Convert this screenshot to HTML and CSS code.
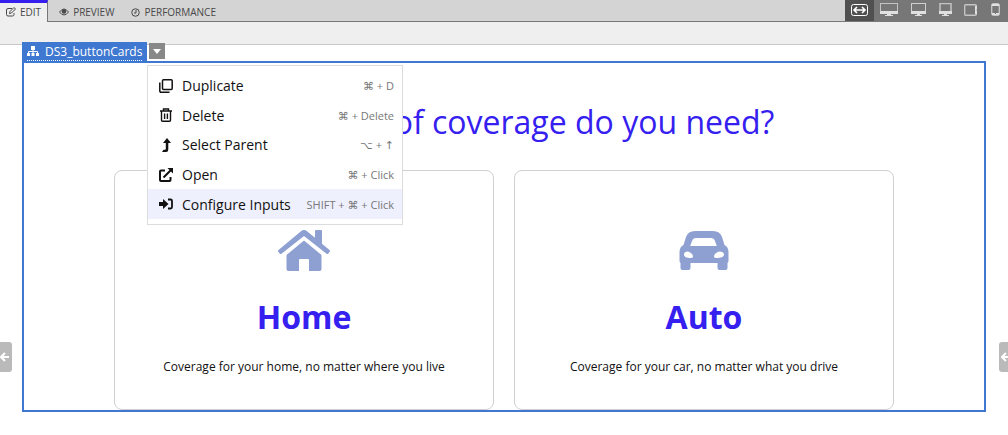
FILE: index.html
```html
<!DOCTYPE html>
<html lang="en">
<head>
<meta charset="utf-8">
<title>Page editor</title>
<link rel="stylesheet" href="styles.css">
</head>
<body>
<header class="topbar">
  <nav class="tabs">
    <button class="tab tab-active"><svg width="10" height="10" viewBox="0 0 20 20" fill="none" stroke="currentColor" stroke-width="2"><path d="M12 3H4a3 3 0 0 0-3 3v9a3 3 0 0 0 3 3h9a3 3 0 0 0 3-3v-3"/><path d="M7 13l1-4 8-8 3 3-8 8z"/></svg>EDIT</button>
    <button class="tab"><svg width="10" height="10" viewBox="0 0 20 20"><path d="M1 10q9-12 18 0q-9 12-18 0z" fill="none" stroke="currentColor" stroke-width="2"/><circle cx="10" cy="9" r="4.500" fill="currentColor"/></svg>PREVIEW</button>
    <button class="tab"><svg width="9" height="9" viewBox="0 0 18 18" fill="none" stroke="currentColor" stroke-width="2"><circle cx="9" cy="9" r="7.500"/><path d="M10 4v6H6"/></svg>PERFORMANCE</button>
  </nav>
  <div class="devices">
    <button class="device device-active" aria-label="Fluid width"><svg width="17" height="12" viewBox="0 0 17 12" fill="none" stroke="#fff"><rect x=".5" y=".5" width="16" height="11" rx="2"/><path d="M3.500 6h10M6 3L3 6l3 3M11 3l3 3-3 3" stroke-width="1.600"/></svg></button>
    <button class="device" aria-label="Wide desktop"><svg width="18" height="13" viewBox="0 0 18 13"><rect x=".5" y=".5" width="17" height="9" fill="none" stroke="#c4c4c4"/><path d="M0 8h18v3H0zM7 11h4v1h2v1H5v-1h2z" fill="#e0e0e0"/></svg></button>
    <button class="device" aria-label="Desktop"><svg width="15" height="13" viewBox="0 0 15 13"><rect x=".5" y=".5" width="14" height="9" fill="none" stroke="#d0d0d0"/><path d="M0 8h15v3H0zM6 11h3v1h2v1H4v-1h2z" fill="#e0e0e0"/></svg></button>
    <button class="device" aria-label="Small desktop"><svg width="13" height="13" viewBox="0 0 13 13"><rect x="1" y=".5" width="11" height="9" fill="none" stroke="#c4c4c4" stroke-width="1.500"/><path d="M0 8h13v3H0zM5 11h3v1h2v1H3v-1h2z" fill="#e0e0e0"/></svg></button>
    <button class="device" aria-label="Tablet"><svg width="13" height="12" viewBox="0 0 13 12"><rect x=".7" y=".7" width="11.600" height="10.600" rx="1" fill="none" stroke="#c4c4c4" stroke-width="1.400"/><path d="M11 2h2v3h-1v2h1v3h-2z" fill="#e0e0e0"/></svg></button>
    <button class="device" aria-label="Phone"><svg width="9" height="13" viewBox="0 0 9 13"><rect x=".7" y=".7" width="7.600" height="11.600" rx="2" fill="none" stroke="#c4c4c4" stroke-width="1.400"/><path d="M1 1h7v2H1zM1 10h3v1h1v-1h3v2H1z" fill="#e0e0e0"/></svg></button>
  </div>
</header>
<div class="subbar"></div>
<main class="workspace">
  <button class="handle handle-left" aria-label="Toggle left panel"><svg width="10" height="10" viewBox="0 0 10 10" fill="none" stroke="#fff" stroke-width="2"><path d="M9 5H2M5 1L1 5l4 4"/></svg></button>
  <section class="frame">
    <div class="selection">
      <button class="component"><span class="component-name"><svg width="12" height="11" viewBox="0 0 12 11"><path d="M4 0h4v4H4zM0 7h3v3H0zM4.500 7h3v3h-3zM9 7h3v3H9z" fill="currentColor"/><path d="M6 4v3M1.500 7V5.500h9V7" fill="none" stroke="currentColor"/></svg>DS3_buttonCards</span></button>
      <button class="more" aria-label="Component actions"><svg width="8" height="5" viewBox="0 0 8 5"><path d="M0 0h8L4 5z" fill="#fff"/></svg></button>
      <div class="menu" role="menu">
        <button class="item" role="menuitem"><svg width="14" height="14" viewBox="0 0 14 14" fill="none" stroke="currentColor" stroke-width="1.500"><rect x="3.500" y=".8" width="9.700" height="9.700" rx="1"/><path d="M.8 3.500V12a1.200 1.200 0 0 0 1.200 1.200h8.500"/></svg><span>Duplicate</span><kbd>⌘ + D</kbd></button>
        <button class="item" role="menuitem"><svg width="14" height="14" viewBox="0 0 14 14" fill="none" stroke="currentColor" stroke-width="1.400"><path d="M1 3h12M4.500 3V1h5v2M2.500 3v9.300q0 1 1 1h7q1 0 1-1V3M5.600 5.500v5.500M8.400 5.500v5.500"/></svg><span>Delete</span><kbd>⌘ + Delete</kbd></button>
        <button class="item" role="menuitem"><svg width="14" height="14" viewBox="0 0 14 14"><path d="M8 0l4 5H9.300v6.500Q9.300 14 7 14H3l1.500-2.300H6q.8 0 .8-.8V5H4z" fill="currentColor"/></svg><span>Select Parent</span><kbd>⌥ + ↑</kbd></button>
        <button class="item" role="menuitem"><svg width="14" height="14" viewBox="0 0 14 14"><path d="M6 2.500H2q-1 0-1 1V12q0 1 1 1h8.500q1 0 1-1V9M4.500 9.500L12 2" fill="none" stroke="currentColor" stroke-width="2"/><path d="M8.500 0H14v5.500z" fill="currentColor"/></svg><span>Open</span><kbd>⌘ + Click</kbd></button>
        <button class="item item-active" role="menuitem"><svg width="14" height="14" viewBox="0 0 14 14"><path d="M0 5h4V2l5.500 5L4 12V9H0z" fill="currentColor"/><path d="M9 2.500h2.500q1.500 0 1.500 1.500v6q0 1.500-1.500 1.500H9" fill="none" stroke="currentColor" stroke-width="1.800"/></svg><span>Configure Inputs</span><kbd>SHIFT + ⌘ + Click</kbd></button>
      </div>
    </div>
    <h1 class="title">What type of coverage do you need?</h1>
    <div class="cards">
      <article class="card">
        <svg class="card-icon" width="52" height="42" viewBox="0 0 52 42" fill="currentColor"><path d="M26 0q1.500 0 3 1.200l8 6.600V1q0-1 1-1h5q1 0 1 1v12.800l7.500 6.200q1 .8.200 1.800L50.300 23.500q-.8 1-1.800.2L26 6 3.500 23.700q-1 .8-1.800-.2L.3 21.800q-.8-1 .2-1.800L23 1.200Q24.500 0 26 0z"/><path d="M26 10.500L43.500 25v14q0 2-2 2H31V30q0-1-1-1h-8q-1 0-1 1v11H10.500q-2 0-2-2V25z"/></svg>
        <h2>Home</h2>
        <p>Coverage for your home, no matter where you live</p>
      </article>
      <article class="card">
        <svg class="card-icon" width="52" height="42" viewBox="0 0 52 42"><path fill="currentColor" fill-rule="evenodd" d="M17 1h18q7 0 9 6L46.500 15q4 2 4 7v9q0 1-1 2v5q0 2-2 2h-6q-2 0-2-2v-5h-27v5q0 2-2 2h-6q-2 0-2-2v-5q-1-1-1-2v-9q0-5 4-7L8 7q2-6 9-6zM18 8q-3 0-4 3l-1.800 5H38.800L37 11q-1-3-4-3zM10 21.500q-4 0-4 3t5 3.500q4 .5 4-1.500 0-3-5-5zm31 0q-5 2-5 5 0 2 4 1.500 6-.5 6-3.500t-5-3z"/></svg>
        <h2>Auto</h2>
        <p>Coverage for your car, no matter what you drive</p>
      </article>
    </div>
  </section>
  <button class="handle handle-right" aria-label="Toggle right panel"><svg width="10" height="10" viewBox="0 0 10 10" fill="none" stroke="#fff" stroke-width="2"><path d="M9 5H2M5 1L1 5l4 4"/></svg></button>
</main>
</body>
</html>
```
FILE: styles.css
```css
* { box-sizing: border-box; }
body {
  margin: 0;
  background: #fff;
  color: #111;
  font-family: "Open Sans", "Noto Sans", sans-serif;
  overflow-x: hidden;
}
button {
  margin: 0;
  padding: 0;
  border: 0;
  background: none;
  color: inherit;
  font: inherit;
}
svg { display: block; flex: none; }
.topbar {
  display: flex;
  justify-content: space-between;
  height: 22px;
  background: #d4d4d4;
  border-bottom: 1px solid #777;
}
.tabs { display: flex; }
.tab {
  display: flex;
  align-items: center;
  gap: 4px;
  padding: 3px 6px 0;
  color: #484848;
  font-size: 10px;
}
.tab + .tab { padding-left: 11px; }
.tab-active {
  height: 22px;
  padding: 0 6px 1px;
  background: #efefef;
  border-top: 3px solid #3520f0;
  border-right: 1px solid #777;
}
.devices { display: flex; background: #777; }
.device {
  display: flex;
  align-items: center;
  justify-content: center;
  width: 25px;
  padding-bottom: 2px;
}
.device-active { width: 29px; background: #505050; }
.device:nth-child(2) { width: 30px; }
.device:nth-child(3) { width: 28px; }
.device:nth-child(4) { width: 26px; }
.subbar { height: 23px; background: #efefef; border-bottom: 1px solid #c8c8c8; }
.workspace {
  position: relative;
  padding: 16px 22px 23px;
}
.frame {
  position: relative;
  border: 2px solid #3f78d0;
  padding: 36px 90px 0;
}
.selection {
  position: absolute;
  top: -21px;
  left: -2px;
  display: flex;
  gap: 2px;
}
.component {
  height: 20px;
  padding: 0 5px;
  background: #3f78d0;
  color: #fff;
  font-size: 12px;
}
.component-name {
  display: flex;
  align-items: center;
  gap: 6px;
  height: 18px;
  border-bottom: 1px dotted #fff;
}
.more {
  display: flex;
  align-items: center;
  justify-content: center;
  width: 16px;
  height: 16px;
  margin-top: 1px;
  background: #888;
}
.menu {
  position: absolute;
  z-index: 1;
  top: 23px;
  left: 125px;
  display: grid;
  grid-auto-rows: 1fr;
  width: 256px;
  height: 160px;
  padding: 5px 0;
  background: #fff;
  border: 1px solid #dcdcdc;
}
.item {
  display: flex;
  align-items: center;
  gap: 9px;
  padding: 0 8px 0 11px;
  font-size: 14px;
  white-space: nowrap;
}
.item-active { background: #eff0fd; }
.item kbd {
  margin-left: auto;
  color: #777;
  font-family: "Open Sans", "Noto Sans", "DejaVu Sans", sans-serif;
  font-size: 11px;
}
.title {
  margin: 0 0 25px;
  color: #3520f0;
  font-size: 32px;
  font-weight: 400;
  line-height: 46px;
  text-align: center;
}
.cards {
  display: grid;
  grid-template-columns: 1fr 1fr;
  gap: 20px;
}
.card {
  display: flex;
  flex-direction: column;
  align-items: center;
  padding: 59px 16px 33px;
  border: 1px solid #d0d0d0;
  border-radius: 8px;
  text-align: center;
}
.card-icon { color: #8ea0d1; }
.card h2 {
  margin: 22px 0 18px;
  color: #3520f0;
  font-size: 32px;
  line-height: 46px;
}
.card p { margin: 0; font-size: 12px; line-height: 18px; }
.handle {
  position: absolute;
  top: 297px;
  width: 12px;
  height: 30px;
  display: flex;
  align-items: center;
  background: #bababa;
}
.handle-left { left: 0; border-radius: 0 3px 3px 0; }
.handle-right { right: -3px; padding-left: 2px; border-radius: 3px 0 0 3px; }
```
